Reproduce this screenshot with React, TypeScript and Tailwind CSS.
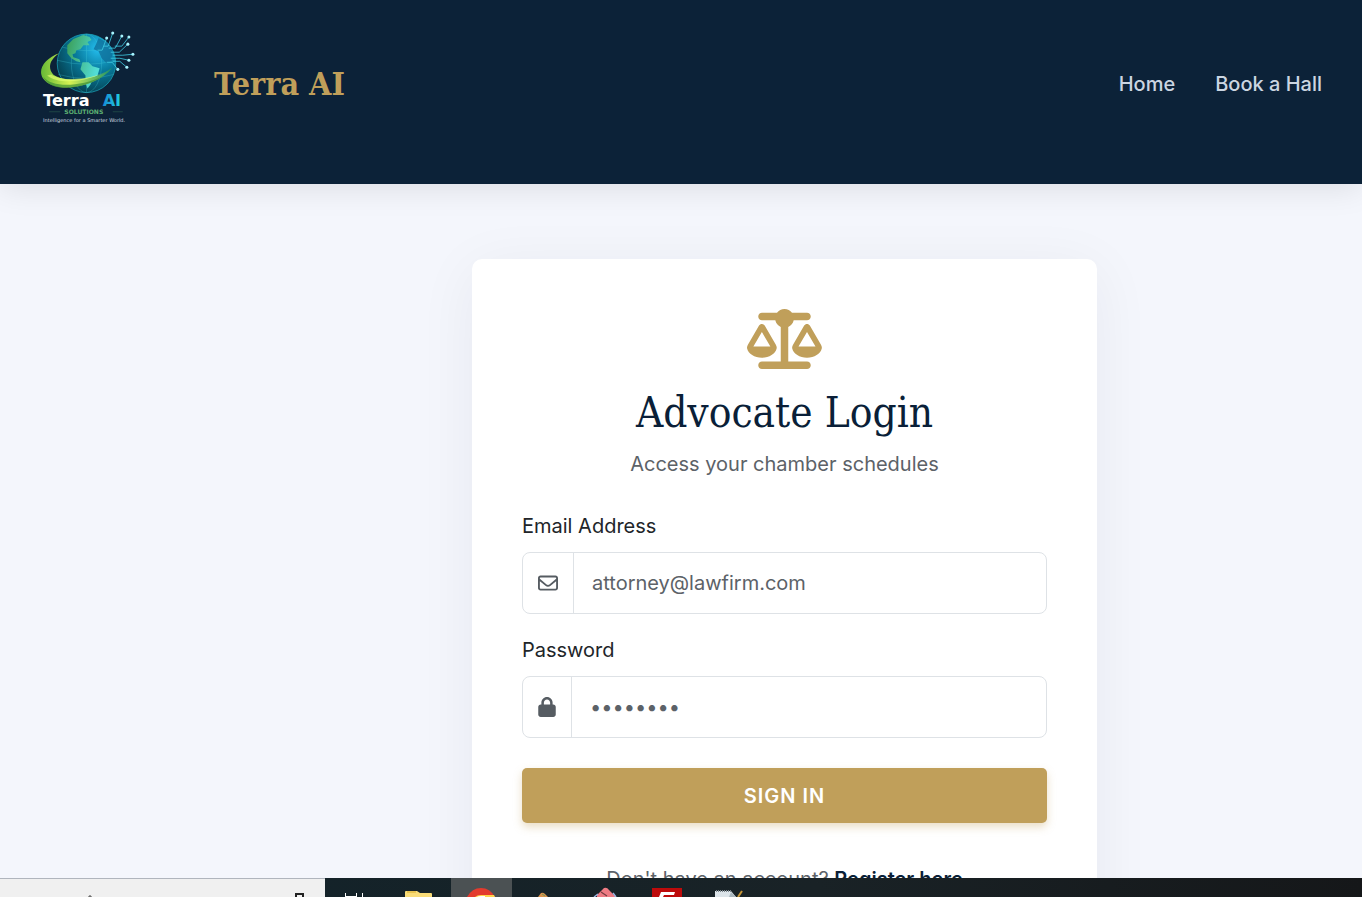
import React from "react";
import { FaLock, FaRegEnvelope, FaScaleBalanced } from "react-icons/fa6";

const nodes = [
  [106, 18, 97, 30],
  [112, 13, 103, 26],
  [121, 16, 108, 28],
  [128, 17, 114, 26],
  [127, 24, 110, 32],
  [132, 34, 112, 35],
  [128, 40, 110, 38],
  [126, 47, 112, 41],
  [117, 49, 106, 42],
];

const Logo = () => (
  <svg viewBox="40 10 95 107" className="h-[108px] w-24" role="img" aria-label="Terra AI Solutions">
    <defs>
      <radialGradient id="ocean" cx="0.7" cy="0.25" r="0.85">
        <stop offset="0" stopColor="#25bff0" />
        <stop offset="0.45" stopColor="#087b9d" />
        <stop offset="1" stopColor="#043947" />
      </radialGradient>
      <linearGradient id="land" x1="0" y1="0" x2="1" y2="0.4">
        <stop offset="0" stopColor="#3b9d54" />
        <stop offset="1" stopColor="#52ddd5" />
      </linearGradient>
      <linearGradient id="ring" x1="0" y1="0" x2="1" y2="0">
        <stop offset="0" stopColor="#67ba36" />
        <stop offset="0.4" stopColor="#d4f052" />
        <stop offset="1" stopColor="#198f68" />
      </linearGradient>
      <linearGradient id="ai" x1="0" y1="0" x2="1" y2="0">
        <stop offset="0" stopColor="#168bd4" />
        <stop offset="1" stopColor="#21cfe1" />
      </linearGradient>
    </defs>
    <circle cx="86" cy="43" r="29" fill="url(#ocean)" stroke="#1ba8bd" strokeWidth="0.7" />
    <g fill="none" stroke="#4ad2e0" strokeWidth="0.4" opacity="0.65">
      <path d="M62 27Q86 34 110 27M57 40Q86 48 115 40M58 54Q86 62 113 54M86 14V72" />
      <ellipse cx="86" cy="43" rx="15" ry="29" />
    </g>
    <path
      d="M67 25L73 19L83 15L89 17L91 20L87 22L89 25L83 25L80 29L76 30L75 33L72 34L73 37L79 39L80 42L76 41L71 38L67 33ZM82 42L88 42L92 46L99 48L97 55L92 58L90 64L87 68L85 62L85 55L80 49Z"
      fill="url(#land)"
    />
    <path d="M98 18L107 23L112 31L111 41L106 43L101 38L98 31L93 29L96 23Z" fill="#0f719b" opacity="0.8" />
    <path
      d="M59 33C45 38 37 49 43 58C53 73 95 69 112 47C97 60 65 63 53 54C47 47 50 39 59 33Z"
      fill="url(#ring)"
    />
    <path d="M43 56C52 68 80 66 102 56C82 69 50 73 43 56Z" fill="#3f8f35" opacity="0.7" />
    <path d="M47 55C61 66 91 60 108 50C92 59 63 62 51 54Z" fill="#e4ff70" opacity="0.65" />
    {nodes.map(([x, y, sx, sy]) => (
      <g key={`${x}-${y}`}>
        <path d={`M${sx} ${sy}L${(x + sx) / 2} ${sy}L${x} ${y}`} fill="none" stroke="#3fcce4" strokeWidth="0.8" />
        <circle cx={x} cy={y} r="1.5" fill="#a7f4ff" />
      </g>
    ))}
    <text x="43" y="85" fontFamily="DejaVu Sans, sans-serif" fontSize="16" fontWeight="700" fill="#fff">
      Terra
    </text>
    <text x="102" y="85" fontFamily="DejaVu Sans, sans-serif" fontSize="16" fontWeight="700" fill="url(#ai)">
      AI
    </text>
    <path d="M49 91H60M112 91H122" stroke="#30684f" strokeWidth="0.5" />
    <text x="64" y="93" fontFamily="DejaVu Sans, sans-serif" fontSize="6" fontWeight="700" fill="#5caf72">
      SOLUTIONS
    </text>
    <text x="43" y="101" fontFamily="DejaVu Sans, sans-serif" fontSize="5" fill="#d1dce2">
      Intelligence for a Smarter World.
    </text>
  </svg>
);

const Header = () => (
  <header className="relative z-10 h-[184px] shrink-0 bg-[#0c2238] px-10 pt-[30px] shadow-[0_4px_30px_rgba(0,0,0,0.1)]">
    <div className="flex items-center justify-between">
      <a href="#home" className="flex items-center gap-[78px]">
        <Logo />
        <span className="font-['DejaVu_Serif_Condensed','DejaVu_Serif',serif] text-[32px] leading-10 font-bold text-[#c09f5a]">
          Terra AI
        </span>
      </a>
      <nav className="flex gap-10 text-xl font-medium text-[#cbd5e1]">
        <a href="#home">Home</a>
        <a href="#book">Book a Hall</a>
      </nav>
    </div>
  </header>
);

type FieldProps = {
  id: string;
  label: string;
  type: string;
  placeholder: string;
  icon: React.ReactNode;
};

const Field = ({ id, label, type, placeholder, icon }: FieldProps) => (
  <div>
    <label htmlFor={id} className="mb-2.5 block leading-8 text-[#212529]">
      {label}
    </label>
    <div className="flex h-[62px] overflow-hidden rounded-lg border border-[#dee2e6]">
      <span className="flex shrink-0 items-center border-r border-[#dee2e6] px-[15px] text-[#565c62]">{icon}</span>
      <input
        id={id}
        type={type}
        placeholder={placeholder}
        className="min-w-0 flex-1 px-[18px] outline-none placeholder:text-[#5c6268]"
      />
    </div>
  </div>
);

const LoginCard = () => (
  <section className="h-fit w-full max-w-[625px] rounded-[10px] bg-white p-[50px] text-xl shadow-[0_10px_60px_rgba(12,34,56,0.06)]">
    <div className="flex flex-col items-center">
      <FaScaleBalanced className="h-[60px] w-[75px] text-[#c09f5a]" />
      <h1 className="mt-4 font-['DejaVu_Serif_Condensed','DejaVu_Serif',serif] text-[42px] leading-[56px] font-normal text-[#0a1f38]">
        Advocate Login
      </h1>
      <p className="mt-[7px] leading-8 text-[#5c6268]">Access your chamber schedules</p>
    </div>
    <form className="mt-[30px] flex flex-col gap-5" onSubmit={(e) => e.preventDefault()}>
      <Field
        id="email"
        label="Email Address"
        type="email"
        placeholder="attorney@lawfirm.com"
        icon={<FaRegEnvelope className="size-5" />}
      />
      <Field
        id="password"
        label="Password"
        type="password"
        placeholder="••••••••"
        icon={<FaLock className="h-5 w-[18px]" />}
      />
      <button
        type="submit"
        className="mt-2.5 h-[55px] rounded-[5px] bg-[#c09f5a] font-semibold tracking-wider text-white shadow-[0_4px_8px_rgba(192,159,90,0.35)]"
      >
        SIGN IN
      </button>
    </form>
    <p className="mt-10 text-center leading-8 text-[#5c6268]">
      Don't have an account?{" "}
      <a href="#register" className="font-semibold text-[#0a1f38]">
        Register here
      </a>
    </p>
  </section>
);

const Taskbar = () => (
  <footer className="relative z-10 flex h-[19px] shrink-0 overflow-hidden bg-linear-to-r from-[#10232b] via-[#192226] via-60% to-[#151719]">
    <div className="w-[325px] shrink-0 border-t border-[#b0b5bd] bg-[#f0f0f0]">
      <svg className="h-[18px] w-full" viewBox="0 0 325 18" fill="none">
        <path d="M89 18V17H91V18" stroke="#444" />
        <path d="M296 18V15H303V18" stroke="#222" strokeWidth="2" />
      </svg>
    </div>
    <div className="w-[126px] shrink-0">
      <svg className="h-[19px] w-full" viewBox="325 0 126 19">
        <path d="M345.500 15V19M345 18.500H357M356.500 15V19M362.500 15V19" fill="none" stroke="#fff" />
        <path d="M405 14Q405 13 406 13H417L420 15H431Q432 15 432 16V19H405Z" fill="#f9dc78" />
        <path d="M407 14H416" stroke="#d6a928" />
      </svg>
    </div>
    <div className="w-[61px] shrink-0 bg-[#4b5153]">
      <svg className="h-[19px] w-full" viewBox="451 0 61 19">
        <path d="M467 19Q472 10 481 10Q490 10 495 19Z" fill="#e33b2e" />
        <path d="M475 19Q477 17 481 17H494L495 19Z" fill="#ffd44d" />
        <path d="M477 19Q478 18 481 18H485V19Z" fill="#fff" />
      </svg>
    </div>
    <div className="w-[248px] shrink-0">
      <svg className="h-[19px] w-full" viewBox="512 0 248 19">
        <path d="M538 19L541 15Q543 14 545 16L548 19Z" fill="#d7914c" />
        <path d="M542 16L545 18" stroke="#719752" />
        <path d="M597 17L604 10Q607 9 609 12L615 18V19H597Z" fill="#ef7c84" />
        <path d="M601 14L607 18" stroke="#753b40" strokeWidth="1.200" />
        <path d="M594 19L598 16M613 15L616 19" stroke="#9bb3df" strokeWidth="1.500" />
        <path d="M652 10H682V19H652Z" fill="#bd0b0b" />
        <path d="M661 14H675L674 17H664L663 19H659Z" fill="#fff" />
        <path d="M715 13H731L736 19H715Z" fill="#dce4e9" />
        <path d="M716 13H732" stroke="#7b858b" strokeDasharray="1 1" strokeWidth="2" />
        <path d="M731 14L736 19H729Z" fill="#a9b6bd" />
        <path d="M742 13L738 19" stroke="#c89636" strokeWidth="2" />
      </svg>
    </div>
  </footer>
);

export default function App() {
  return (
    <div className="flex h-screen flex-col overflow-hidden bg-[#f4f6fc] font-['Inter',sans-serif]">
      <Header />
      <main className="flex min-h-0 flex-1 justify-center overflow-hidden pt-[75px] pl-[207px]">
        <LoginCard />
      </main>
      <Taskbar />
    </div>
  );
}
